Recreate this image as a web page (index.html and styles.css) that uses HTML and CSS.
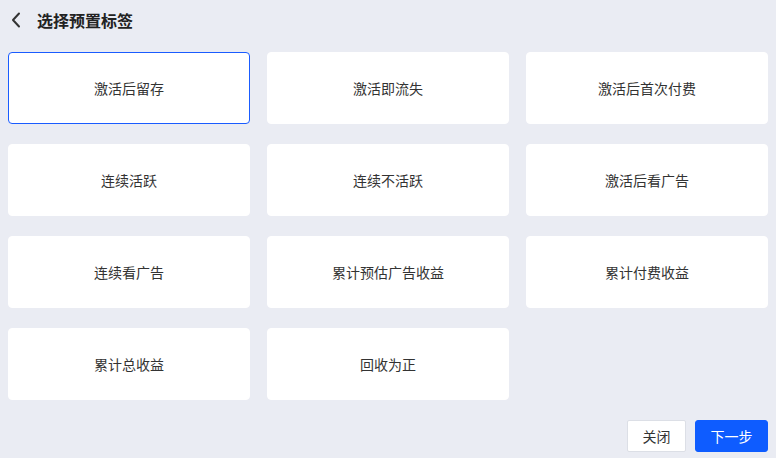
FILE: index.html
```html
<!DOCTYPE html>
<html lang="zh">
<head>
<meta charset="utf-8">
<link rel="stylesheet" href="styles.css">
</head>
<body>
<div class="page">
  <header class="header">
    <svg class="back" width="10" height="16" viewBox="0 0 10 16"><path d="M8 1.5 L2 8 L8 14.5" fill="none" stroke="#333" stroke-width="2" stroke-linecap="round" stroke-linejoin="round"/></svg>
    <h1 class="title">选择预置标签</h1>
  </header>
  <div class="grid">
    <div class="card selected">激活后留存</div>
    <div class="card">激活即流失</div>
    <div class="card">激活后首次付费</div>
    <div class="card">连续活跃</div>
    <div class="card">连续不活跃</div>
    <div class="card">激活后看广告</div>
    <div class="card">连续看广告</div>
    <div class="card">累计预估广告收益</div>
    <div class="card">累计付费收益</div>
    <div class="card">累计总收益</div>
    <div class="card">回收为正</div>
  </div>
  <div class="footer">
    <button class="btn btn-default">关闭</button>
    <button class="btn btn-primary">下一步</button>
  </div>
</div>
</body>
</html>
```
FILE: styles.css
```css
html, body {
  margin: 0;
  padding: 0;
  background: #eaecf3;
  font-family: "Noto Sans CJK SC", "Noto Sans", sans-serif;
  color: #333;
}
.page {
  width: 776px;
  height: 458px;
  padding: 0 8px;
  box-sizing: border-box;
}
.header {
  height: 40px;
  display: flex;
  align-items: center;
  padding-left: 3px;
}
.back {
  display: block;
}
.title {
  margin: 0 0 0 16px;
  font-size: 16px;
  font-weight: 600;
  color: #222;
  line-height: 20px;
}
.grid {
  margin-top: 12px;
  display: grid;
  grid-template-columns: repeat(3, 242px);
  column-gap: 17px;
  row-gap: 20px;
  grid-auto-rows: 72px;
}
.card {
  background: #fff;
  border: 1px solid #fff;
  border-radius: 4px;
  display: flex;
  align-items: center;
  justify-content: center;
  font-size: 14px;
  color: #333;
}
.card.selected {
  border-color: #1a5cff;
}
.footer {
  margin-top: 20px;
  display: flex;
  justify-content: flex-end;
  gap: 9px;
}
.btn {
  font-family: inherit;
  font-size: 14px;
  height: 32px;
  border-radius: 2px;
  padding: 0;
  cursor: pointer;
}
.btn-default {
  width: 59px;
  background: #fff;
  border: 1px solid #dcdfe6;
  color: #333;
}
.btn-primary {
  width: 73px;
  background: #0e5cff;
  border: 1px solid #0e5cff;
  color: #fff;
  border-radius: 3px;
}
```
